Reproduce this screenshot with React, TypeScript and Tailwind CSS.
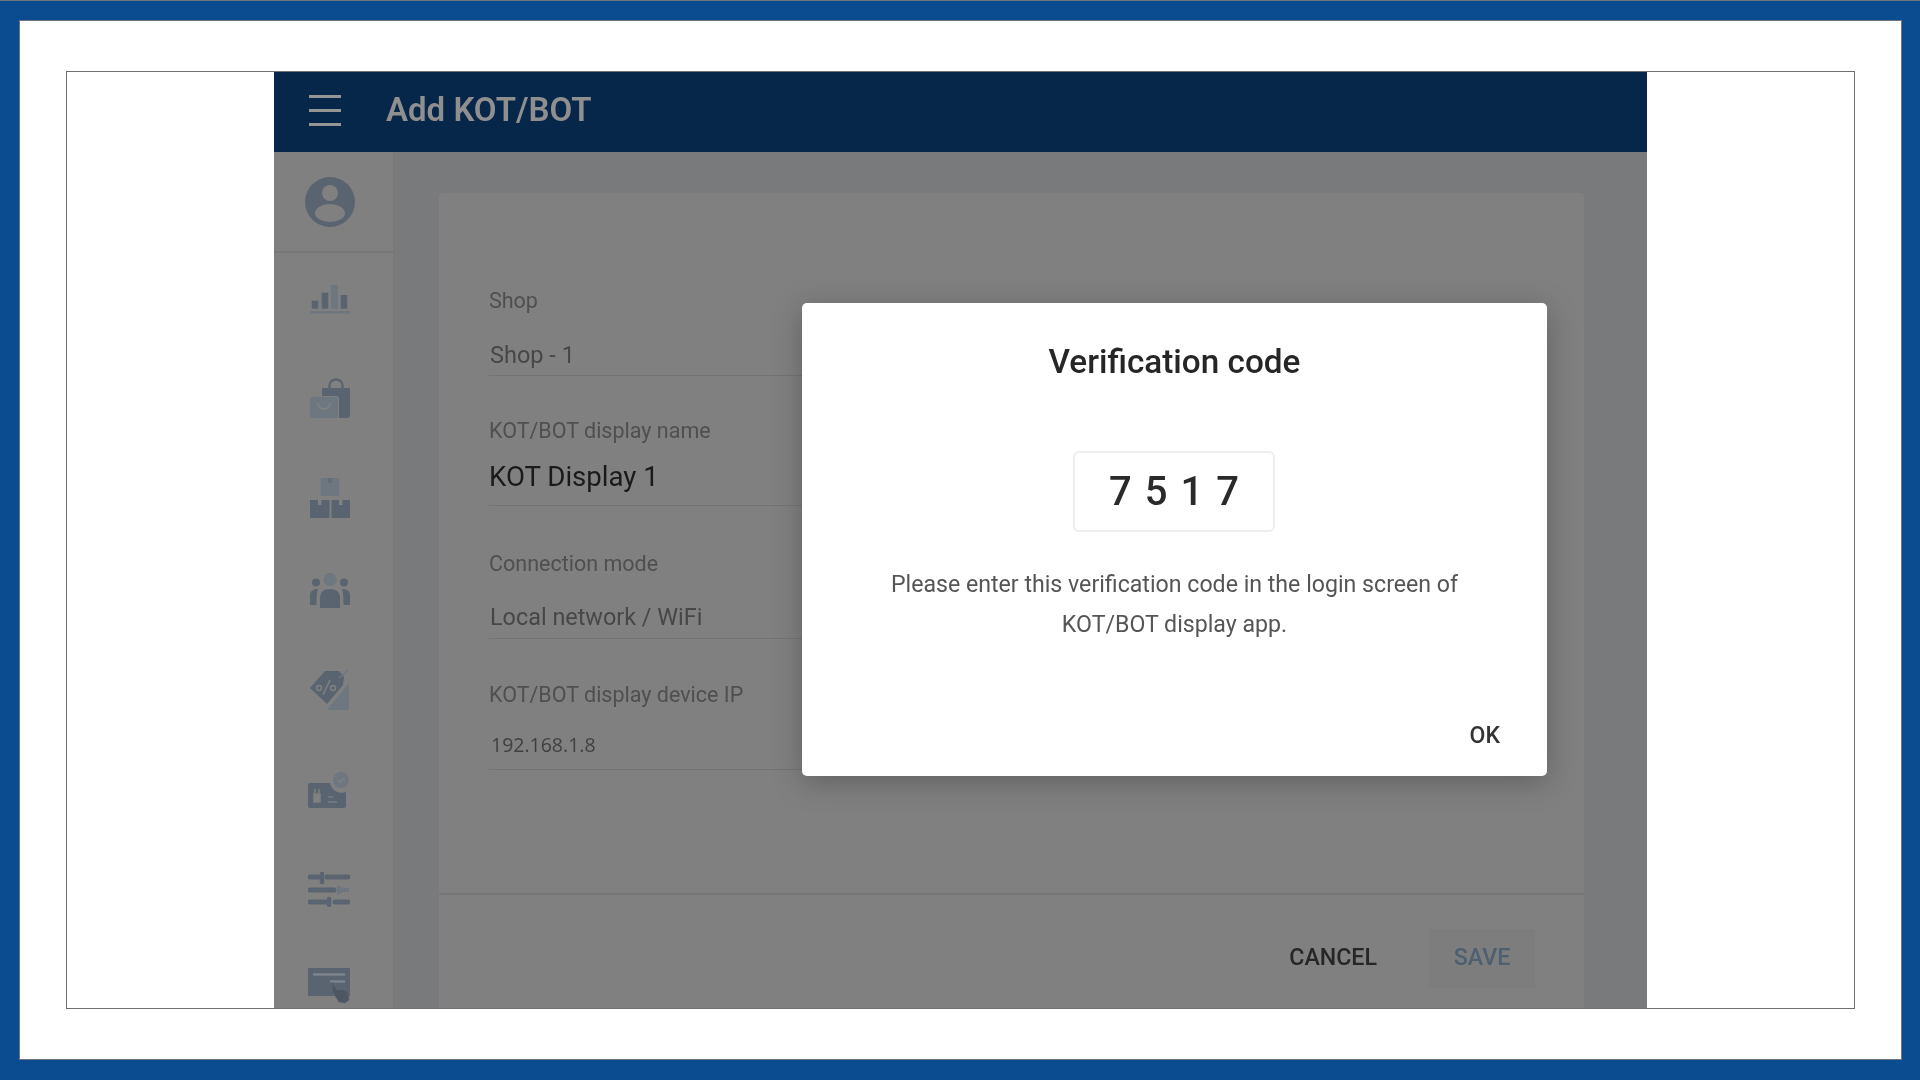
import React from "react";

const D = "#5a6470";
const L = "#6e7680";
const B = "#808080";

function Avatar() {
  return (
    <svg width="50" height="50" viewBox="0 0 50 50">
      <circle cx="25" cy="25" r="25" fill={D} />
      <circle cx="25" cy="16" r="8" fill={B} />
      <ellipse cx="25" cy="36" rx="15" ry="9" fill={B} />
    </svg>
  );
}
function Bars() {
  return (
    <svg width="40" height="29" viewBox="0 0 40 29">
      <rect x="1.7" y="15.7" width="6.6" height="8" fill={D} />
      <rect x="11.7" y="7.7" width="6.6" height="16" fill={D} />
      <rect x="21" y="0" width="7" height="23.7" rx="1" fill={L} />
      <rect x="30.7" y="10" width="6.6" height="13.7" fill={D} />
      <rect x="0" y="26" width="40" height="2.5" fill={L} />
    </svg>
  );
}
function Bag() {
  return (
    <svg width="40" height="40" viewBox="0 0 40 40">
      <path d="M19.5 11V7a6.5 5.5 0 0 1 13 0v4" fill="none" stroke={D} strokeWidth="2.4" />
      <path d="M12 10h28v27a3 3 0 0 1-3 3H12z" fill={D} />
      <rect x="-1" y="18" width="30" height="23" rx="3" fill={B} />
      <rect x="0" y="19" width="28" height="21" rx="2.5" fill={L} />
      <path d="M8 25c0 8 12 8 12 0" fill="none" stroke={B} strokeWidth="1.8" />
    </svg>
  );
}
function Boxes() {
  return (
    <svg width="40" height="40" viewBox="0 0 40 40">
      <rect x="10.700" y="0" width="18.600" height="18" fill={L} />
      <path d="M0 22h8v5h3.500v-5h8v18H0z" fill={D} />
      <path d="M21.500 22H29v5h3.500v-5H40v18H21.500z" fill={D} />
      <rect x="18" y="0" width="3.500" height="5" fill="#626b76" />
    </svg>
  );
}
function People() {
  return (
    <svg width="40" height="35" viewBox="0 0 40 35">
      <circle cx="20" cy="6.5" r="6.5" fill={L} />
      <circle cx="6" cy="9.5" r="4" fill={D} />
      <circle cx="34" cy="9.5" r="4" fill={D} />
      <path d="M10 35V25c0-6 4-9 10-9s10 3 10 9v10z" fill={D} />
      <path d="M0 32v-9c0-5 3-7 8-7-1 3-1.500 6-1.500 16z" fill={D} />
      <path d="M40 32v-9c0-5-3-7-8-7 1 3 1.500 6 1.500 16z" fill={D} />
    </svg>
  );
}
function Tag() {
  return (
    <svg width="40" height="40" viewBox="0 0 40 40">
      <path d="M39 13v25a2 2 0 0 1-2 2H17z" fill={L} />
      <path d="M0 18 15 1h14l5 6-1 8L17 34z" fill={D} />
      <path d="M38 0 29 8" stroke={L} strokeWidth="1.500" />
      <circle cx="9" cy="18" r="2.400" fill="none" stroke={B} strokeWidth="1.500" />
      <circle cx="23" cy="18" r="2.400" fill="none" stroke={B} strokeWidth="1.500" />
      <path d="M20 10 13 25" stroke={B} strokeWidth="1.500" />
    </svg>
  );
}
function IdCard() {
  return (
    <svg width="42" height="36" viewBox="0 0 42 36">
      <path d="M2 11h20a12 12 0 0 0 16 9v14a2 2 0 0 1-2 2H2a2 2 0 0 1-2-2V13a2 2 0 0 1 2-2z" fill={D} />
      <circle cx="33" cy="8" r="8" fill={L} />
      <path d="M29.500 8l2.500 2.500 4.500-4.500" fill="none" stroke={B} strokeWidth="1.500" />
      <path d="M7 17v4m4-4v4M6 22h6v8H6z" fill={B} stroke={B} strokeWidth="1.500" />
      <path d="M20 25h5M20 30h9" stroke={L} strokeWidth="1.800" />
    </svg>
  );
}
function Sliders() {
  return (
    <svg width="42" height="35" viewBox="0 0 42 35">
      <path d="M2 5h9M19 5h21M2 18h24M2 30h17M27 30h13" stroke={D} strokeWidth="5" strokeLinecap="round" />
      <path d="M14 2v8M21 27v6" stroke={D} strokeWidth="4.500" strokeLinecap="round" />
      <path d="M29 13v10l6-3h6v-4h-6z" fill={L} />
    </svg>
  );
}
function CardHand() {
  return (
    <svg width="42" height="40" viewBox="0 0 42 40">
      <rect x="0" y="0" width="42" height="28" fill={D} />
      <path d="M5 6.500h32M22 13.500h15" stroke="#7d838b" strokeWidth="2.500" />
      <path d="M24 14l5 8 5-1 6 3 1 8-4 3-6-1-7-11z" fill="#4e5761" stroke={D} strokeWidth="1" />
    </svg>
  );
}

function Label({ children, className }: { children: React.ReactNode; className: string }) {
  return <div className={`h-[28px] text-[21.5px] leading-[28px] text-[#4f4f4f] ${className}`}>{children}</div>;
}

export default function App() {
  const roboto = "font-['Roboto','Liberation_Sans',sans-serif]";
  return (
    <div className={`h-screen w-screen overflow-hidden border-t border-[#6f7680] bg-[#0a4c8f] pt-[19px] pr-[18px] pb-[20px] pl-[19px] ${roboto}`}>
      <div className="h-full border border-[#6f7680] bg-white pt-[50px] pr-[46px] pb-[50px] pl-[46px]">
        <div className="flex h-full justify-center border border-[#6f6f6f]">
          <div className="relative flex h-full w-[1373px] flex-col overflow-hidden">
            <header className="flex h-[80px] shrink-0 items-center bg-[#06264a] blur-[0.6px]">
              <div className="ml-[35px] -mt-[3px] flex w-[32px] flex-col gap-[11px]">
                <div className="h-[3px] bg-[#959595]" />
                <div className="h-[3px] bg-[#959595]" />
                <div className="h-[3px] bg-[#959595]" />
              </div>
              <div className="ml-[45px] -mt-[4px] text-[33px] font-semibold text-[#8f8f8f]">Add KOT/BOT</div>
            </header>
            <div className="flex min-h-0 flex-1 blur-[0.6px]">
              <aside className="flex w-[120px] shrink-0 flex-col border-r border-[#787878] bg-[#808080]">
                <div className="flex h-[101px] shrink-0 items-start justify-start border-b-2 border-[#777777] pt-[25px] pl-[31px]">
                  <Avatar />
                </div>
                <div className="flex flex-col pl-[36px]">
                  <div className="mt-[32px]"><Bars /></div>
                  <div className="mt-[64px]"><Bag /></div>
                  <div className="mt-[60px]"><Boxes /></div>
                  <div className="mt-[55px]"><People /></div>
                  <div className="mt-[62px]"><Tag /></div>
                  <div className="mt-[62px] -ml-[2px]"><IdCard /></div>
                  <div className="mt-[64px] -ml-[2px]"><Sliders /></div>
                  <div className="mt-[61px] -ml-[2px]"><CardHand /></div>
                </div>
              </aside>
              <main className="flex min-w-0 flex-1 flex-col bg-[#797a7c] pt-[41px] pr-[63px] pl-[45px]">
                <div className="flex min-h-0 flex-1 flex-col rounded-t-[4px] bg-[#808080]">
                  <div className="min-h-0 flex-1 pt-[94px] pl-[50px]">
                    <div className="w-[620px]">
                      <Label className="">Shop</Label>
                      <div className="border-b border-[#747474] pt-[20px] pl-[1px] text-[23.500px] leading-[40px] text-[#474747]">Shop - 1</div>
                      <Label className="mt-[41px]">KOT/BOT display name</Label>
                      <div className="border-b border-[#747474] pt-[12px] pb-[8px] text-[27.600px] leading-[40px] text-[#1a1a1a]">KOT Display 1</div>
                      <Label className="mt-[44px]">Connection mode</Label>
                      <div className="border-b border-[#747474] pt-[19px] pb-[1px] pl-[1px] text-[23.400px] leading-[40px] text-[#474747]">Local network / WiFi</div>
                      <Label className="mt-[42px]">KOT/BOT display device IP</Label>
                      <div className="border-b border-[#747474] pt-[16px] pb-[4px] pl-[2px] font-['Open_Sans',sans-serif] text-[19.500px] leading-[40px] text-[#404040]">192.168.1.8</div>
                    </div>
                  </div>
                  <footer className="flex h-[115px] shrink-0 items-start justify-end border-t-2 border-[#777777] pt-[34px] pr-[49px]">
                    <div className="flex h-[59px] items-center pb-[3px] text-[23.200px] font-medium text-[#262626]">CANCEL</div>
                    <div className="ml-[52px] flex h-[59px] w-[106px] items-center justify-center bg-[#7d7d7d] pb-[3px] text-[23.200px] font-medium text-[#4d6072]">SAVE</div>
                  </footer>
                </div>
              </main>
            </div>
            <div className="absolute top-[231px] left-[528px] flex h-[473px] w-[745px] flex-col items-center rounded-[5px] bg-white pt-[39px] shadow-[0_6px_30px_rgba(0,0,0,0.25)] blur-[0.4px]">
              <div className="text-[33.300px] leading-[40px] font-medium text-[#262626]">Verification code</div>
              <div className="mt-[69px] -ml-[2px] flex h-[81px] w-[202px] items-center justify-center rounded-[6px] border-2 border-[#eeeeee] pl-[14px] text-[40px] font-medium tracking-[13px] text-[#2a2a2a]">7517</div>
              <div className="mt-[33px] text-center text-[23.150px] leading-[40px] text-[#555555]">
                <div>Please enter this verification code in the login screen of</div>
                <div>KOT/BOT display app.</div>
              </div>
              <div className="mt-[71px] self-end pr-[47px] text-[23px] leading-[40px] font-medium text-[#333333]">OK</div>
            </div>
          </div>
        </div>
      </div>
    </div>
  );
}
